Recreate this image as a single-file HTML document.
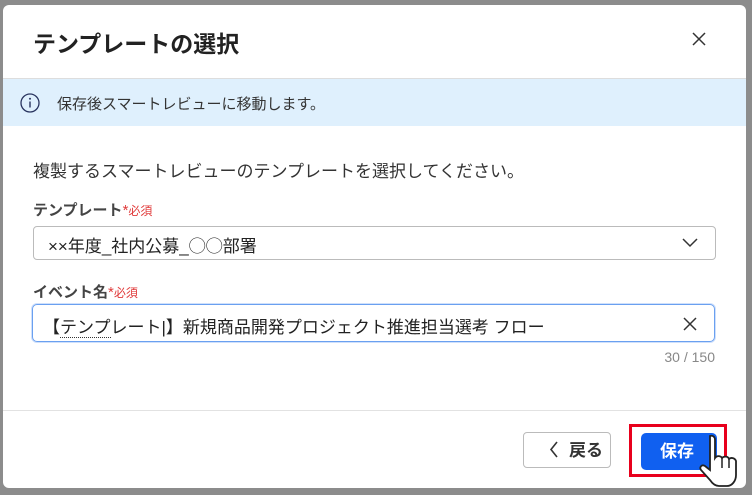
<!DOCTYPE html><html><head><meta charset="utf-8"><style>
body{margin:0;width:752px;height:495px;background:#8c8c8c;font-family:"Liberation Sans","Noto Sans CJK JP",sans-serif;position:relative;overflow:hidden;color:#222}
.m{position:absolute;left:3px;top:5px;width:743px;height:483px;background:#fff;border-radius:6px;overflow:hidden}
.a{position:absolute;white-space:nowrap}
</style></head><body>
<div class="m">
<div class="a" style="left:30px;top:20px;font-size:23px;font-weight:bold;color:#222">テンプレートの選択</div>
<svg class="a" style="left:689px;top:27px" width="14" height="14"><path d="M1 1L13 13M13 1L1 13" stroke="#333" stroke-width="1.5"/></svg>
<div class="a" style="left:0;top:73px;width:743px;height:1px;background:#ddd"></div>
<div class="a" style="left:0;top:74px;width:743px;height:47px;background:#dff0fd"></div>
<svg class="a" style="left:17px;top:88px" width="20" height="20"><circle cx="10" cy="10" r="9" fill="none" stroke="#2a3560" stroke-width="1.3"/><path d="M10 8.5v6" stroke="#2a3560" stroke-width="1.4"/><circle cx="10" cy="5.8" r="1" fill="#2a3560"/></svg>
<div class="a" style="left:54px;top:88px;font-size:15px;color:#333">保存後スマートレビューに移動します。</div>
<div class="a" style="left:30px;top:152px;font-size:17px;color:#333">複製するスマートレビューのテンプレートを選択してください。</div>
<div class="a" style="left:30px;top:194px;font-size:15px;color:#444;font-weight:bold">テンプレート<span style="color:#e03a3a;font-weight:normal">*<span style="font-size:12px">必須</span></span></div>
<div class="a" style="left:30px;top:221px;width:681px;height:32px;border:1px solid #bbb;border-radius:4px"></div>
<div class="a" style="left:45px;top:227px;font-size:17px;color:#222">××年度_社内公募_◯◯部署</div>
<svg class="a" style="left:679px;top:233px" width="16" height="10"><path d="M1 1L8 8L15 1" fill="none" stroke="#333" stroke-width="1.5"/></svg>
<div class="a" style="left:30px;top:276px;font-size:15px;color:#444;font-weight:bold">イベント名<span style="color:#e03a3a;font-weight:normal">*<span style="font-size:12px">必須</span></span></div>
<div class="a" style="left:29px;top:299px;width:681px;height:36px;border:1.5px solid #6aa0f0;border-radius:5px;box-shadow:0 0 0 1px #cfe0fb"></div>
<div class="a" style="left:40px;top:308px;font-size:17px;color:#222">【<span style="border-bottom:1px dotted #333">テンプ</span>レート|】新規商品開発プロジェクト推進担当選考 フロー</div>
<svg class="a" style="left:680px;top:312px" width="14" height="14"><path d="M1 1L13 13M13 1L1 13" stroke="#333" stroke-width="1.5"/></svg>
<div class="a" style="right:31px;top:344px;font-size:14px;color:#888">30 / 150</div>
<div class="a" style="left:0;top:405px;width:743px;height:1px;background:#e2e2e2"></div>
<div class="a" style="left:520px;top:427px;width:86px;height:34px;border:1px solid #bbb;border-radius:4px"></div>
<svg class="a" style="left:546px;top:436px" width="10" height="17"><path d="M8 1L2 8.5L8 16" fill="none" stroke="#333" stroke-width="1.6"/></svg>
<div class="a" style="left:566px;top:435px;font-size:17px;line-height:22px;color:#333;font-weight:bold">戻る</div>
<div class="a" style="left:626px;top:419px;width:98px;height:53px;border:3px solid #e8001c;box-sizing:border-box"></div>
<div class="a" style="left:638px;top:428px;width:76px;height:37px;background:#1060f0;border-radius:5px;color:#fff;font-size:17px;font-weight:bold;line-height:37px;padding-left:19px;box-sizing:border-box">保存</div>
<svg class="a" style="left:693px;top:427px" width="45" height="58"><path d="M14 4c3-1 5 1 5 4v18c2-3 6-2 7 0c2-2 6-2 7 1c2-2 6-1 7 2v14c0 6-4 11-9 11h-8c-4 0-7-3-9-6l-9-10c-2-3 1-6 4-4l5 4V8c0-2 0-3 0-4z" fill="#fff" stroke="#222" stroke-width="1.8"/><path d="M26 26v10M33 27v9" stroke="#222" stroke-width="1.5"/></svg>
</div>
</body></html>
